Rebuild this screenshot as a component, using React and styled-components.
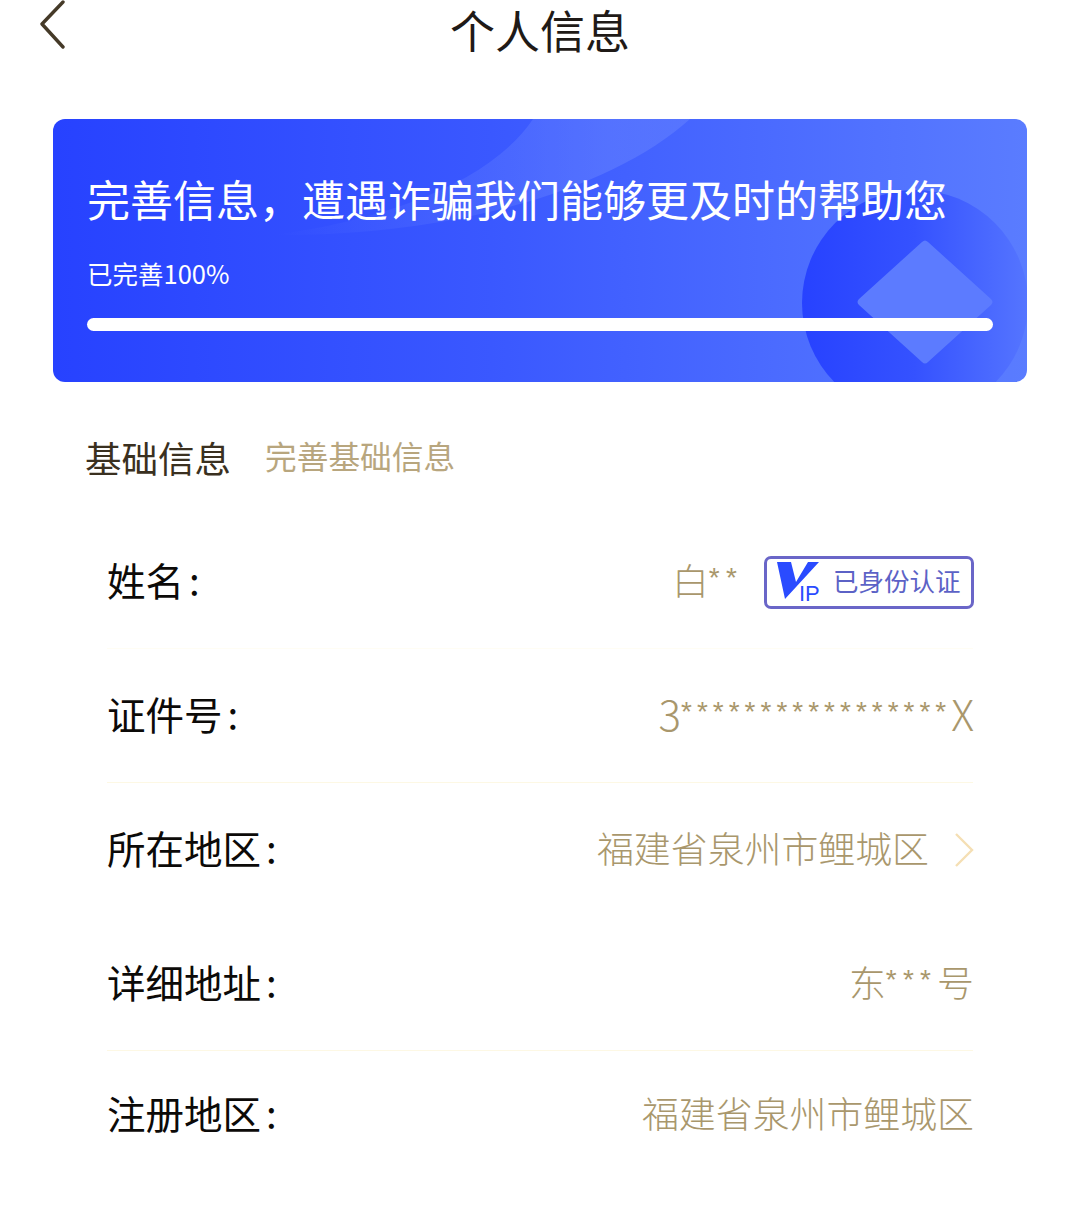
import React from "react";
import styled, { createGlobalStyle } from "styled-components";

const GlobalStyle = createGlobalStyle`
  html, body {
    margin: 0;
    padding: 0;
    background: #fff;
    font-family: "Noto Sans CJK SC", "Noto Sans", sans-serif;
  }
`;

const Page = styled.div`
  width: 1080px;
  height: 1228px;
  overflow: hidden;
  box-sizing: border-box;
  padding: 0 53px;
`;

const Header = styled.header`
  position: relative;
  height: 119px;
  margin: 0 -53px;
  padding-top: 3px;
  box-sizing: border-box;
  text-align: center;
  h1 {
    margin: 0;
    font-size: 45px;
    line-height: 54px;
    font-weight: 400;
    color: #1f1a17;
  }
  svg {
    position: absolute;
    left: 37px;
    top: 0;
  }
`;

const Banner = styled.section`
  position: relative;
  height: 263px;
  box-sizing: border-box;
  padding: 49px 34px 0;
  border-radius: 12px;
  overflow: hidden;
  color: #fff;
  background: linear-gradient(90deg, #2742ff 0%, #3a58ff 45%, #5a7cff 100%);
`;

const BannerArt = styled.svg`
  position: absolute;
  left: 0;
  top: 0;
`;

const BannerTitle = styled.h2`
  position: relative;
  margin: 0;
  font-size: 43px;
  line-height: 60px;
  font-weight: 400;
  white-space: nowrap;
`;

const BannerSub = styled.div`
  position: relative;
  margin-top: 30px;
  font-size: 25.5px;
  line-height: 30px;
`;

const Progress = styled.div`
  position: relative;
  margin-top: 30px;
  height: 13px;
  border-radius: 7px;
  background: #fff;
`;

const SectionHead = styled.div`
  display: flex;
  align-items: center;
  gap: 34px;
  margin-top: 50px;
  padding-left: 32px;
  height: 52px;
`;

const SectionTitle = styled.h3`
  margin: 0;
  font-size: 36.5px;
  font-weight: 400;
  color: #3a3020;
  line-height: 52px;
`;

const SectionHint = styled.span`
  font-size: 31.7px;
  line-height: 44px;
  margin-top: -6px;
  color: #b8a67e;
`;

const List = styled.div`
  margin: 31px 54px 0 54px;
`;

const lineColors = { faint: "#fffdf4", soft: "#fdf8e4" };

const Row = styled.div`
  display: flex;
  align-items: center;
  justify-content: space-between;
  height: ${(p) => (p.$short ? 128 : 134)}px;
  box-sizing: border-box;
  padding-bottom: 6px;
  border-bottom: 1px solid ${(p) => lineColors[p.$line] || "transparent"};
`;

const Label = styled.span`
  font-size: 38.5px;
  line-height: 50px;
  color: #0c0a08;
  white-space: nowrap;
`;

const Colon = styled.span`
  margin-left: 5px;
`;

const Value = styled.div`
  display: flex;
  align-items: center;
  margin-right: -1px;
  font-size: 36.9px;
  line-height: 50px;
  font-weight: 300;
  color: #a9976c;
  white-space: nowrap;
`;

const Stars = styled.span`
  font-family: "Liberation Sans", sans-serif;
  font-weight: 400;
  letter-spacing: ${(p) => p.$spacing}px;
  font-size: 28px;
  line-height: 32px;
  margin-bottom: 2px;
`;

const Edge = styled.span`
  font-size: 42px;
`;

const Badge = styled.div`
  display: flex;
  align-items: center;
  gap: 12px;
  box-sizing: border-box;
  margin: 8px 0 0 21px;
  width: 210px;
  height: 53px;
  padding-left: 10px;
  border: 3px solid #6a66c8;
  border-radius: 7px;
  font-size: 25.5px;
  line-height: 40px;
  font-weight: 400;
  color: #5c62c6;
`;

const BadgeText = styled.span`
  margin-bottom: 6px;
`;

const Chevron = styled.svg`
  margin: 6px 0 0 25px;
`;

function Vip() {
  return (
    <svg width="44" height="44" viewBox="0 0 44 44">
      <path d="M0 1h14l5 20L31 1h11L8 38z" fill="#2a4bff" />
      <text x="22" y="40" fontSize="22" fontFamily="Liberation Sans, sans-serif" fill="#2a4bff">IP</text>
    </svg>
  );
}

export default function App() {
  return (
    <Page>
      <GlobalStyle />
      <Header>
        <svg width="32" height="52" viewBox="0 0 32 52">
          <path d="M26 2 5 24l21 23" fill="none" stroke="#453a28" strokeWidth="3.4" strokeLinecap="round" strokeLinejoin="round" />
        </svg>
        <h1>个人信息</h1>
      </Header>

      <Banner>
        <BannerArt width="974" height="263" viewBox="0 0 974 263">
          <defs>
            <linearGradient id="swoosh" x1="0" y1="0" x2="1" y2="0">
              <stop offset="0" stopColor="#7d98ff" stopOpacity="0" />
              <stop offset="0.8" stopColor="#7d98ff" stopOpacity="0.32" />
              <stop offset="1" stopColor="#7d98ff" stopOpacity="0.3" />
            </linearGradient>
            <linearGradient id="coin" x1="0" y1="0" x2="1" y2="0">
              <stop offset="0" stopColor="#2742ff" />
              <stop offset="0.5" stopColor="#3552ff" />
              <stop offset="1" stopColor="#5575ff" />
            </linearGradient>
          </defs>
          <path d="M637 0C560 70 400 118 220 116C340 100 440 60 480 0Z" fill="url(#swoosh)" />
          <circle cx="862" cy="184" r="113" fill="url(#coin)" />
          <path d="M869 123Q872 120 875 123L938 180Q941 183 938 186L875 243Q872 246 869 243L806 186Q803 183 806 180Z" fill="#5c7bff" />
        </BannerArt>
        <BannerTitle>完善信息，遭遇诈骗我们能够更及时的帮助您</BannerTitle>
        <BannerSub>已完善100%</BannerSub>
        <Progress />
      </Banner>

      <SectionHead>
        <SectionTitle>基础信息</SectionTitle>
        <SectionHint>完善基础信息</SectionHint>
      </SectionHead>

      <List>
        <Row $line="faint">
          <Label>姓名<Colon>:</Colon></Label>
          <Value>
            白<Stars $spacing={6.2}>**</Stars>
            <Badge>
              <Vip />
              <BadgeText>已身份认证</BadgeText>
            </Badge>
          </Value>
        </Row>
        <Row $line="soft">
          <Label>证件号<Colon>:</Colon></Label>
          <Value>
            <Edge>3</Edge>
            <Stars $spacing={5}>*****************</Stars>
            <Edge>X</Edge>
          </Value>
        </Row>
        <Row>
          <Label>所在地区<Colon>:</Colon></Label>
          <Value>
            福建省泉州市鲤城区
            <Chevron width="20" height="36" viewBox="0 0 20 36">
              <path d="M2 2 18 18 2 34" fill="none" stroke="#f5dfb4" strokeWidth="2.4" />
            </Chevron>
          </Value>
        </Row>
        <Row $line="soft">
          <Label>详细地址<Colon>:</Colon></Label>
          <Value>
            东<Stars $spacing={6.2}>***</Stars>号
          </Value>
        </Row>
        <Row $short>
          <Label>注册地区<Colon>:</Colon></Label>
          <Value>福建省泉州市鲤城区</Value>
        </Row>
      </List>
    </Page>
  );
}
